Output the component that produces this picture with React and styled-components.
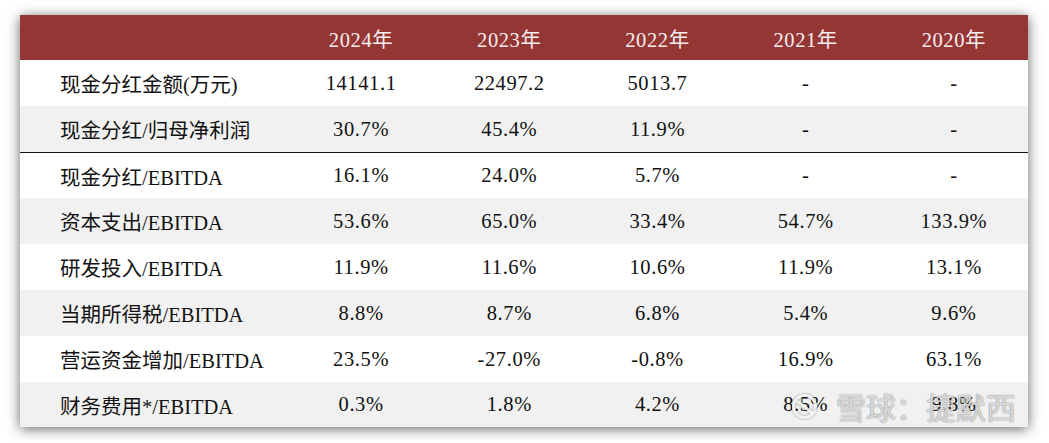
import React from 'react';
import styled, { createGlobalStyle } from 'styled-components';

const GlobalStyle = createGlobalStyle`
  html, body {
    margin: 0;
    padding: 0;
    background: #ffffff;
  }
`;

const Page = styled.div`
  width: 1049px;
  height: 443px;
  padding: 15px 0 0 20px;
  box-sizing: border-box;
`;

const Sheet = styled.div`
  position: relative;
  width: 1008px;
  background: #ffffff;
  box-shadow: 0 2px 12px rgba(0, 0, 0, 0.6);
  font-family: 'Liberation Serif', 'Noto Sans CJK SC', serif;
  font-size: 20.5px;
  color: #111;
`;

const Row = styled.div`
  display: grid;
  grid-template-columns: 267px repeat(5, 1fr);
  align-items: center;
  height: ${(p) => p.$h}px;
  background: ${(p) => (p.$shade ? '#f1f1f1' : '#ffffff')};
  border-top: ${(p) => (p.$rule ? '1px solid #111' : 'none')};
  box-sizing: border-box;
`;

const HeadRow = styled(Row)`
  background: #943634;
  color: #f7eeee;
`;

const Label = styled.div`
  padding-left: 40px;
  white-space: nowrap;
`;

const Cell = styled.div`
  text-align: center;
  letter-spacing: 0.6px;
  white-space: nowrap;
`;

const Mark = styled.div`
  position: absolute;
  right: 12px;
  bottom: 4px;
  display: flex;
  align-items: center;
  gap: 18px;
  pointer-events: none;
`;

const MarkText = styled.span`
  font-family: 'Noto Sans CJK SC', sans-serif;
  font-size: 30px;
  line-height: 34px;
  color: rgba(255, 255, 255, 0.72);
  text-shadow: 0 0 1px rgba(0, 0, 0, 0.45), 0 0 2px rgba(0, 0, 0, 0.25);
`;

const Logo = styled.svg`
  width: 27px;
  height: 27px;
  filter: drop-shadow(0 0 1px rgba(0, 0, 0, 0.45));
`;

const years = ['2024年', '2023年', '2022年', '2021年', '2020年'];

const rows = [
  ['现金分红金额(万元)', '14141.1', '22497.2', '5013.7', '-', '-'],
  ['现金分红/归母净利润', '30.7%', '45.4%', '11.9%', '-', '-'],
  ['现金分红/EBITDA', '16.1%', '24.0%', '5.7%', '-', '-'],
  ['资本支出/EBITDA', '53.6%', '65.0%', '33.4%', '54.7%', '133.9%'],
  ['研发投入/EBITDA', '11.9%', '11.6%', '10.6%', '11.9%', '13.1%'],
  ['当期所得税/EBITDA', '8.8%', '8.7%', '6.8%', '5.4%', '9.6%'],
  ['营运资金增加/EBITDA', '23.5%', '-27.0%', '-0.8%', '16.9%', '63.1%'],
  ['财务费用*/EBITDA', '0.3%', '1.8%', '4.2%', '8.5%', '9.8%'],
];

export default function App() {
  return (
    <Page>
      <GlobalStyle />
      <Sheet>
        <HeadRow $h={45}>
          <Label />
          {years.map((y) => (
            <Cell key={y}>{y}</Cell>
          ))}
        </HeadRow>
        {rows.map((r, i) => (
          <Row key={r[0]} $h={i === rows.length - 1 ? 45 : 46} $shade={i % 2 === 1} $rule={i === 2}>
            <Label>{r[0]}</Label>
            {r.slice(1).map((v, j) => (
              <Cell key={j}>{v}</Cell>
            ))}
          </Row>
        ))}
        <Mark>
          <Logo viewBox="0 0 28 28">
            <circle cx="14" cy="14" r="11.5" fill="none" stroke="rgba(255,255,255,0.85)" strokeWidth="3" />
            <path d="M7 9 C12 12 15 15 21 20" fill="none" stroke="rgba(255,255,255,0.85)" strokeWidth="3" strokeLinecap="round" />
          </Logo>
          <MarkText>雪球：捷默西</MarkText>
        </Mark>
      </Sheet>
    </Page>
  );
}
